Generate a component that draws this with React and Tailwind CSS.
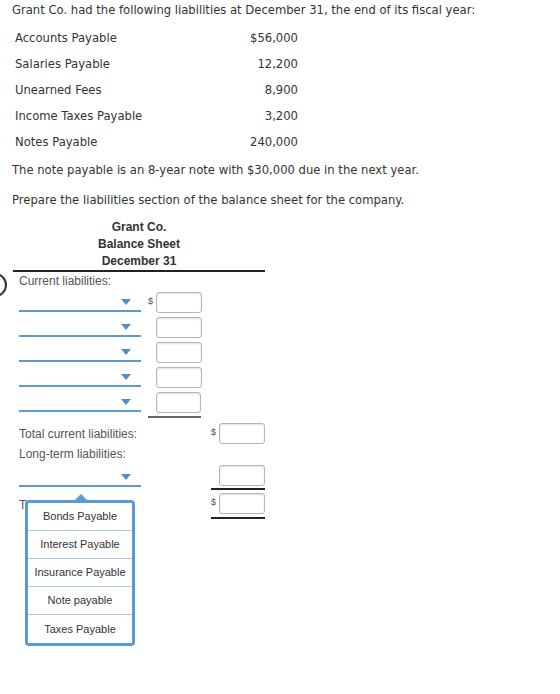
import React from "react";

const liabilities = [
  ["Accounts Payable", "$56,000"],
  ["Salaries Payable", "12,200"],
  ["Unearned Fees", "8,900"],
  ["Income Taxes Payable", "3,200"],
  ["Notes Payable", "240,000"],
];

const choices = [
  "Bonds Payable",
  "Interest Payable",
  "Insurance Payable",
  "Note payable",
  "Taxes Payable",
];

function Caret() {
  return (
    <span className="h-0 w-0 border-x-[5px] border-t-[6px] border-x-transparent border-t-[#4a8fcf]" />
  );
}

function Select({ className = "" }) {
  return (
    <div className={`flex w-[122px] items-end justify-end border-b-2 border-[#5b9bd5] pb-[5px] pr-[10px] ${className}`}>
      <Caret />
    </div>
  );
}

function Amount({ dollar }) {
  return (
    <div className="flex items-start">
      <span className="w-[8px] pt-[4px] text-[9px] leading-[10px] text-[#555]">{dollar ? "$" : ""}</span>
      <div className="h-[21px] w-[46px] rounded-[3px] border border-[#b5b5b5] bg-white shadow-[inset_0_1px_2px_rgba(0,0,0,0.12)]" />
    </div>
  );
}

export default function App() {
  return (
    <div className="relative h-[694px] w-[560px] overflow-hidden bg-white text-[#333]">
      <div className="font-['DejaVu_Sans',sans-serif] text-[11.6px]">
        <p className="mt-[2px] pl-[12px] leading-[16px]">
          Grant Co. had the following liabilities at December 31, the end of its fiscal year:
        </p>
        <div className="mt-[8px]">
          {liabilities.map(([name, value]) => (
            <div key={name} className="flex h-[26px] w-[298px] items-center justify-between pl-[15px]">
              <span>{name}</span>
              <span>{value}</span>
            </div>
          ))}
        </div>
        <p className="mt-[6px] pl-[12px] leading-[16px]">
          The note payable is an 8-year note with $30,000 due in the next year.
        </p>
        <p className="mt-[14px] pl-[12px] leading-[16px]">
          Prepare the liabilities section of the balance sheet for the company.
        </p>
      </div>

      <div className="font-['Liberation_Sans',sans-serif] text-[12px]">
        <div className="ml-[13px] mt-[11px] w-[252px] border-b-2 border-[#222] text-center text-[12px] font-bold leading-[17px] text-[#333]">
          <div>Grant Co.</div>
          <div>Balance Sheet</div>
          <div>December 31</div>
        </div>

        <div className="pl-[19px] text-[#555]">
          <div className="h-[17px] pt-[2px] leading-[14px]">Current liabilities:</div>

          {[0, 1, 2, 3].map((i) => (
            <div key={i} className="flex h-[25px] items-start gap-[7px]">
              <Select className="h-[23px]" />
              <div className="pt-[3px]">
                <Amount dollar={i === 0} />
              </div>
            </div>
          ))}
          <div className="flex h-[29px] items-start gap-[7px]">
            <Select className="h-[23px]" />
            <div className="h-[29px] w-[53px] border-b-2 border-[#666] pt-[3px]">
              <Amount />
            </div>
          </div>

          <div className="flex h-[28px] items-start">
            <span className="w-[192px] pt-[10px] leading-[12px]">Total current liabilities:</span>
            <div className="pt-[5px]">
              <Amount dollar />
            </div>
          </div>
          <div className="h-[16px] leading-[16px]">Long-term liabilities:</div>
          <div className="flex h-[28px] items-start">
            <Select className="h-[25px]" />
            <div className="ml-[70px] h-[28px] w-[54px] border-b-2 border-[#222] pt-[3px]">
              <Amount />
            </div>
          </div>
          <div className="flex h-[29px] items-start">
            <span className="w-[192px] pt-[9px] leading-[12px]">Total liabilities:</span>
            <div className="h-[29px] w-[54px] border-b-2 border-[#222] pt-[3px]">
              <Amount dollar />
            </div>
          </div>
        </div>
      </div>

      {/* open select menu, drawn over the rows below its trigger */}
      <div className="absolute left-[25px] top-[500px] w-[110px] rounded-[4px] border-[3px] border-[#5b9bd5] bg-white font-['Liberation_Sans',sans-serif] text-[11px] text-[#333]">
        <span className="absolute -top-[9px] left-[47px] h-0 w-0 border-x-[6px] border-b-[6px] border-x-transparent border-b-[#5b9bd5]" />
        {choices.map((c, i) => (
          <div
            key={c}
            className={`flex h-[28px] items-center justify-center ${i < choices.length - 1 ? "border-b border-[#a8c9e8]" : ""}`}
          >
            {c}
          </div>
        ))}
      </div>

      {/* edge of a round marker cut off at the page's left side */}
      <div className="absolute left-[-17px] top-[273px] h-[24px] w-[24px] rounded-full border-2 border-[#333]" />
    </div>
  );
}
